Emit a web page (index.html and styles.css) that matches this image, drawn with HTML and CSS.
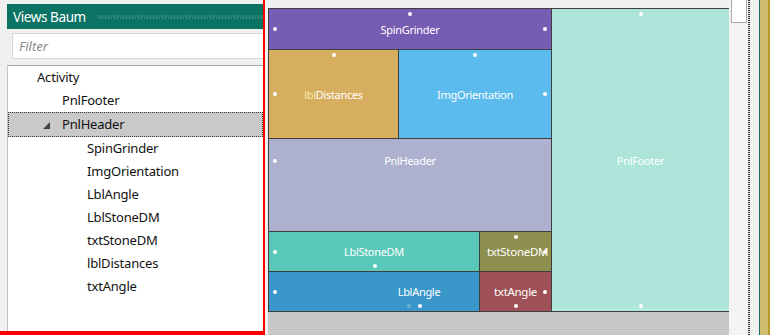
FILE: index.html
```html
<!DOCTYPE html>
<html lang="de">
<head>
    <meta charset="UTF-8">
    <title>Designer</title>
    <link rel="stylesheet" href="styles.css">
</head>
<body>
    <div class="app">
        <aside class="views">
            <div class="views-head">
                <span class="views-title">Views Baum</span>
                <span class="grip"></span>
            </div>
            <div class="filter-row">
                <div class="filter"><span class="placeholder">Filter</span></div>
            </div>
            <ul class="tree">
                <li class="node lvl0">Activity</li>
                <li class="node lvl1">PnlFooter</li>
                <li class="node lvl1 selected"><span class="twisty"></span>PnlHeader</li>
                <li class="node lvl2">SpinGrinder</li>
                <li class="node lvl2">ImgOrientation</li>
                <li class="node lvl2">LblAngle</li>
                <li class="node lvl2">LblStoneDM</li>
                <li class="node lvl2">txtStoneDM</li>
                <li class="node lvl2">lblDistances</li>
                <li class="node lvl2">txtAngle</li>
            </ul>
        </aside>

        <main class="designer">
            <div class="surface">
                <div class="canvas">
                    <div class="view spin">
                        SpinGrinder
                        <span class="h h-top"></span><span class="h h-left"></span><span class="h h-right"></span>
                    </div>
                    <div class="view dist">
                        <span><span class="tint">lbl</span>Distances</span>
                        <span class="h h-top"></span><span class="h h-left"></span>
                    </div>
                    <div class="view orient">
                        ImgOrientation
                        <span class="h h-top"></span><span class="h h-right"></span>
                    </div>
                    <div class="view header">
                        PnlHeader
                        <span class="h h-left h-high"></span>
                    </div>
                    <div class="view stone">
                        LblStoneDM
                        <span class="h h-left"></span><span class="h h-bottom"></span>
                    </div>
                    <div class="view txtstone">
                        txtStoneDM
                        <span class="h h-top"></span><span class="h h-right"></span>
                    </div>
                    <div class="view angle">
                        LblAngle
                        <span class="h h-left"></span><span class="h h-bottom ghost"></span><span class="h h-bottom"></span>
                    </div>
                    <div class="view txtangle">
                        txtAngle
                        <span class="h h-right"></span><span class="h h-bottom"></span>
                    </div>
                    <div class="view footer">
                        PnlFooter
                        <span class="h h-top"></span><span class="h h-bottom"></span>
                    </div>
                </div>
            </div>
        </main>

        <div class="vscroll"><div class="thumb"></div></div>
        <div class="splitter"></div>
        <div class="gutter"></div>
        <div class="edge"></div>
    </div>
</body>
</html>
```

FILE: styles.css
```css
:root {
    --panel-bg: #f0f0f0;
    --head-bg: #0b7363;
    --line: #3e3e3e;
    --ui-font: 'Noto Sans', 'Open Sans', sans-serif;
}

* {
    box-sizing: border-box;
}

body {
    margin: 0;
    background-color: var(--panel-bg);
    font-family: var(--ui-font);
}

.app {
    display: flex;
    width: 770px;
    height: 335px;
    overflow: hidden;
}

/* views tree */

.views {
    width: 265px;
    height: 335px;
    padding-left: 7px;
    padding-top: 4px;
    display: flex;
    flex-direction: column;
    border-right: 2px solid #ff0000;
    border-bottom: 4px solid #ff0000;
}

.views-head {
    height: 25px;
    background-color: var(--head-bg);
    display: flex;
    align-items: center;
    padding-left: 6px;
}

.views-title {
    color: #ffffff;
    font-size: 13.5px;
    letter-spacing: -0.4px;
}

.grip {
    flex: 1;
    height: 4px;
    margin-left: 11px;
    margin-top: 1px;
    background-image:
        radial-gradient(circle at 1px 1px, rgba(255, 255, 255, 0.3) 0.6px, transparent 0.8px),
        radial-gradient(circle at 2.5px 3px, rgba(255, 255, 255, 0.3) 0.6px, transparent 0.8px);
    background-size: 3px 4px;
}

.filter-row {
    padding: 4px 0 6px 5px;
}

.filter {
    height: 26px;
    background-color: #ffffff;
    border: 1px solid #d6d6d6;
    border-right: none;
    display: flex;
    align-items: center;
    padding-left: 6px;
}

.placeholder {
    color: #8a8a8a;
    font-style: italic;
    font-size: 13px;
}

.tree {
    flex: 1;
    list-style: none;
    margin: 0;
    padding: 0;
    background-color: #ffffff;
    border-top: 1px solid #a9a9a9;
    border-left: 1px solid #c4c4c4;
}

.node {
    height: 23px;
    line-height: 23px;
    font-size: 13px;
    letter-spacing: -0.2px;
    color: #111111;
    white-space: nowrap;
    display: flex;
    align-items: center;
}

.lvl0 { padding-left: 29px; }
.lvl1 { padding-left: 54px; }
.lvl2 { padding-left: 79px; }

.node.selected {
    height: 25px;
    background-color: #c9c9c9;
    border: 1px dotted #333333;
    padding-left: 34px;
}

.twisty {
    width: 0;
    height: 0;
    border-left: 7px solid transparent;
    border-bottom: 7px solid #404040;
    margin-right: 12px;
    margin-top: 1px;
}

/* designer canvas */

.designer {
    width: 464px;
    padding: 8px 0 0 3px;
}

.surface {
    height: 100%;
    background-color: #c8c8c8;
}

.canvas {
    display: grid;
    grid-template-columns: 129px 80px 71px 177px;
    grid-template-rows: 40px 88px 92px 39px 39px;
    gap: 1px;
    background-color: var(--line);
    border-top: 1px solid var(--line);
    border-left: 1px solid var(--line);
    border-bottom: 1px solid var(--line);
    width: 461px;
}

.view {
    position: relative;
    display: flex;
    align-items: center;
    justify-content: center;
    color: #ffffff;
    font-size: 11px;
    letter-spacing: -0.3px;
    white-space: nowrap;
}

.spin { grid-column: 1 / 4; background-color: #765cb2; }
.dist { background-color: #d7ae60; }
.orient { grid-column: 2 / 4; background-color: #5bbbec; }
.header {
    grid-column: 1 / 4;
    background-color: #adb1cf;
    align-items: flex-start;
    padding-top: 14px;
}
.stone { grid-column: 1 / 3; background-color: #5ac8b8; }
.txtstone { background-color: #8f8f50; overflow: hidden; padding-left: 4px; font-size: 11.5px; }
.angle { grid-column: 1 / 3; background-color: #3a97ca; padding-left: 90px; }
.txtangle { background-color: #a05157; font-size: 11.5px; }
.footer {
    grid-column: 4;
    grid-row: 1 / 6;
    background-color: #ace4da;
    box-shadow: inset 0 -4px 0 #b3eae0;
}

.tint {
    color: #f6eaa6;
}

/* resize handles */

.h {
    position: absolute;
    width: 4px;
    height: 4px;
    border-radius: 50%;
    background-color: #ffffff;
}

.h-top { top: 3px; left: 50%; margin-left: -2px; }
.h-bottom { bottom: 3px; left: 50%; margin-left: -2px; }
.h-left { left: 4px; top: 50%; margin-top: -2px; }
.h-right { right: 4px; top: 50%; margin-top: -2px; }
.h-high { top: 20px; margin-top: 0; }

.angle .h-bottom { left: 151px; }
.angle .ghost { left: 140px; opacity: 0.25; }
.stone .h-bottom { left: 106px; }

/* right-hand strips */

.vscroll {
    width: 19px;
    background-color: #f4f4f4;
    padding-left: 2px;
}

.thumb {
    width: 16px;
    height: 23px;
    background-color: #ffffff;
    border: 1px solid #a9a9a9;
    border-top: none;
}

.splitter {
    width: 2px;
    background-image: repeating-linear-gradient(to bottom, #333333 0 1px, #e8e8e8 1px 2px);
}

.gutter {
    width: 9px;
    background-color: var(--panel-bg);
}

.edge {
    width: 11px;
    background-color: #cebd71;
    border-left: 1px solid #1d6c66;
    border-right: 2px solid #b8982d;
}
```
